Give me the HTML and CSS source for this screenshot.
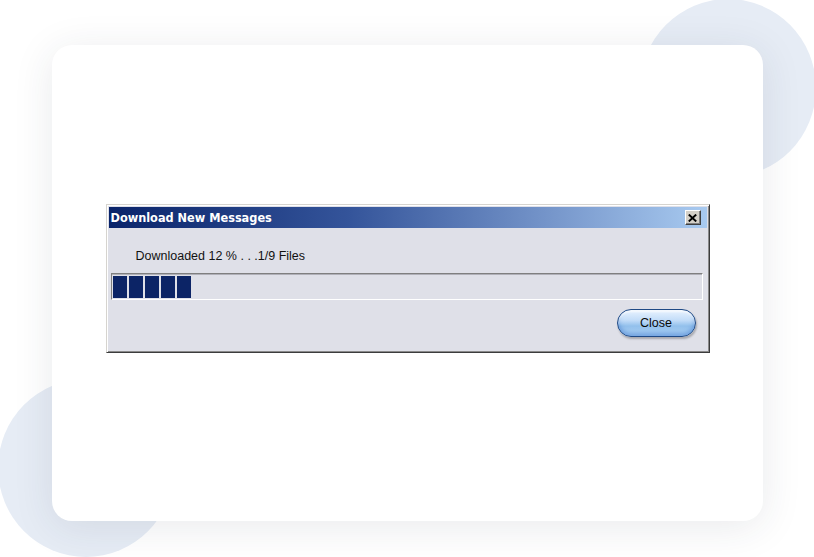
FILE: index.html
```html
<!DOCTYPE html>
<html>
<head>
<meta charset="utf-8">
<link rel="stylesheet" href="styles.css">
</head>
<body>
<div class="stage">
  <div class="blob blob-tr"></div>
  <div class="blob blob-bl"></div>
  <div class="card">
    <div class="dialog">
      <div class="titlebar">
        <span class="title">Download New Messages</span>
        <span class="xbtn">
          <svg width="9" height="8" viewBox="0 0 9 8"><path d="M0.8 0.6 L8.2 7.4 M8.2 0.6 L0.8 7.4" stroke="#000" stroke-width="2" fill="none"/></svg>
        </span>
      </div>
      <div class="body">
        <div class="status">Downloaded 12 % . . .1/9 Files</div>
        <div class="trough">
          <span class="blk"></span><span class="blk"></span><span class="blk"></span><span class="blk"></span><span class="blk"></span>
        </div>
        <div class="actions">
          <button class="closebtn">Close</button>
        </div>
      </div>
    </div>
  </div>
</div>
</body>
</html>
```

FILE: styles.css
```css
html, body {
  margin: 0;
  padding: 0;
  background: #ffffff;
}
.stage {
  position: relative;
  width: 814px;
  height: 557px;
  overflow: hidden;
  padding: 45px 51px 36px 52px;
  box-sizing: border-box;
}
.blob {
  position: absolute;
  border-radius: 50%;
  background: #e6ecf5;
}
.blob-tr {
  left: 640px;
  top: -1px;
  width: 176px;
  height: 178px;
}
.blob-bl {
  left: -2px;
  top: 379px;
  width: 176px;
  height: 178px;
}
.card {
  position: relative;
  width: 711px;
  height: 476px;
  background: #ffffff;
  border-radius: 20px;
  box-shadow: 0 6px 40px rgba(40, 50, 70, 0.10);
  display: flex;
  align-items: center;
  justify-content: center;
  padding-bottom: 9px;
  box-sizing: border-box;
}
.dialog {
  width: 604px;
  height: 149px;
  box-sizing: border-box;
  background: #dfe0e8;
  border-top: 1px solid #d6d4cf;
  border-left: 1px solid #d6d4cf;
  border-right: 1px solid #3c3c3c;
  border-bottom: 1px solid #3c3c3c;
  box-shadow: inset 1px 1px 0 #ffffff, inset -1px -1px 0 #8a8a8a;
  padding: 2px;
  display: flex;
  flex-direction: column;
}
.titlebar {
  height: 21px;
  flex: none;
  background: linear-gradient(to right, #0a246a 0%, #34549a 40%, #7898cc 75%, #a8caf0 100%);
  display: flex;
  align-items: center;
  justify-content: space-between;
  padding: 0 6px 0 2px;
}
.title {
  color: #ffffff;
  font-family: "DejaVu Sans", sans-serif;
  font-stretch: condensed;
  font-weight: bold;
  font-size: 12.6px;
}
.xbtn {
  width: 16px;
  height: 15px;
  box-sizing: border-box;
  background: #d4d0c8;
  border-top: 1px solid #ffffff;
  border-left: 1px solid #ffffff;
  border-right: 1px solid #404040;
  border-bottom: 1px solid #404040;
  box-shadow: inset -1px -1px 0 #808080;
  display: flex;
  align-items: center;
  justify-content: center;
}
.body {
  flex: 1;
  display: flex;
  flex-direction: column;
  padding: 21px 4px 0 2px;
}
.status {
  font-family: "Liberation Sans", Arial, sans-serif;
  font-size: 12.5px;
  line-height: 14px;
  color: #111111;
  padding-left: 25px;
  height: 14px;
}
.trough {
  margin-top: 10px;
  height: 27px;
  box-sizing: border-box;
  border-top: 1px solid #7f7f7f;
  border-left: 1px solid #7f7f7f;
  border-right: 1px solid #ffffff;
  border-bottom: 1px solid #ffffff;
  box-shadow: inset 0 1px 0 #b0b0b8;
  padding: 2px 1px 1px 1px;
  display: flex;
  gap: 2px;
}
.blk {
  width: 14px;
  height: 22px;
  background: #0c2466;
}
.actions {
  display: flex;
  justify-content: flex-end;
  margin-top: 9px;
  padding-right: 7px;
}
.closebtn {
  width: 79px;
  height: 28px;
  border-radius: 14px;
  border: 1px solid #1f4a86;
  background: linear-gradient(to bottom, #e8f3ff 0%, #c2dcf8 40%, #92c0ec 62%, #b4d8f8 100%);
  box-shadow: inset 0 -3px 4px rgba(50, 110, 200, 0.5), inset 0 2px 2px rgba(255,255,255,0.8), 1px 2px 2px rgba(0,0,0,0.25);
  font-family: "Liberation Sans", Arial, sans-serif;
  font-size: 12.5px;
  color: #0a0a0a;
  padding: 0;
  cursor: pointer;
}
```
